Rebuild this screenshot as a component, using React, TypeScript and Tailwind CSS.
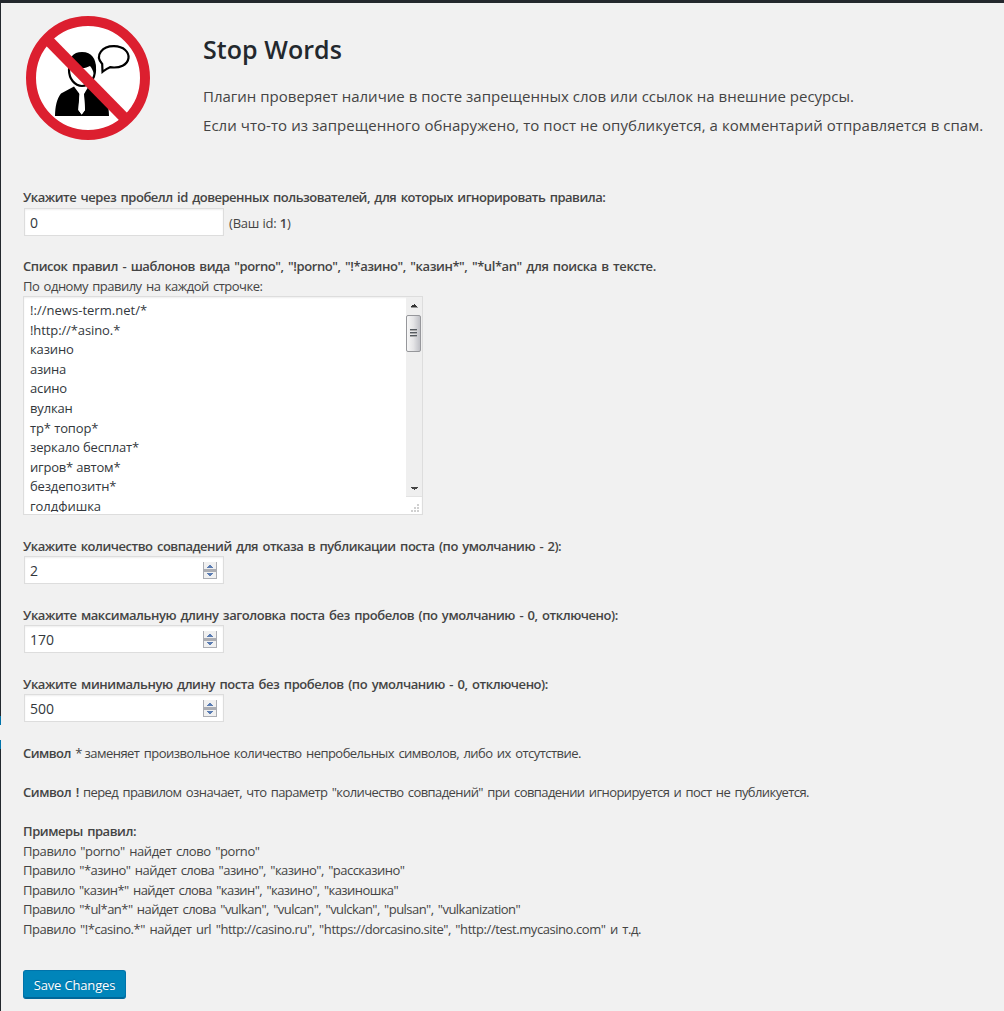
import type { ReactNode } from "react";

const rules = [
  { text: "!://news-term.net/*", cls: "tracking-[0.03px]" },
  { text: "!http://*asino.*", cls: "tracking-[-0.1px]" },
  { text: "казино", cls: "tracking-[-0.15px]" },
  { text: "азина", cls: "tracking-[-0.25px]" },
  { text: "асино", cls: "tracking-[-0.15px]" },
  { text: "вулкан", cls: "tracking-[-0.15px]" },
  { text: "тр* топор*", cls: "tracking-[-0.12px]" },
  { text: "зеркало бесплат*", cls: "tracking-[-0.15px]" },
  { text: "игров* автом*", cls: "tracking-[-0.2px]" },
  { text: "бездепозитн*", cls: "tracking-[-0.15px]" },
  { text: "голдфишка", cls: "tracking-[-0.04px]" },
];

const examples = [
  { text: 'Правило "porno" найдет слово "porno"', cls: "tracking-[-0.4px]" },
  { text: 'Правило "*азино" найдет слова "азино", "казино", "рассказино"', cls: "tracking-[-0.524px]" },
  { text: 'Правило "казин*" найдет слова "казин", "казино", "казиношка"', cls: "tracking-[-0.565px]" },
  {
    text: 'Правило "*ul*an*" найдет слова "vulkan", "vulcan", "vulckan", "pulsan", "vulkanization"',
    cls: "tracking-[-0.546px]",
  },
  {
    text: 'Правило "!*casino.*" найдет url "http://casino.ru", "https://dorcasino.site", "http://test.mycasino.com" и т.д.',
    cls: "tracking-[-0.435px]",
  },
];

function StopLogo() {
  return (
    <svg className="block h-[126px] w-[126px]" viewBox="25 15 126 126">
      <circle cx="88" cy="78" r="57" fill="#fff" stroke="#dc1f2f" strokeWidth="10" />
      <path
        d="M55 116C55 107 57 98 61 93.500L74 86.500L79.500 94L78.300 110L81.700 114.500L85 110L84 94L88.500 86.500L102 93.500C107 98 109 107 109 116Z"
        fill="#000"
      />
      <path d="M77.500 87L81.700 88.500L86 87L84.500 92L83.800 94L85 110L81.700 114.500L78.400 110L79.700 94Z" fill="#fff" />
      <ellipse cx="82" cy="70" rx="13" ry="16" fill="#fff" stroke="#000" strokeWidth="2.200" />
      <path d="M68 69C68 58 73 52 82 52C92 52 96 59 96 68L94 74C93 71 92 68 90 66C86 68 82 69 78 67L70 64L70 72Z" fill="#000" />
      <path
        d="M102.500 71.800L102.200 64C94 55 103 46 114 46.200C124 46.500 129 52 128.500 58C127.500 65 120 68.500 110 67.200C107 68.500 105 70 102.500 71.800Z"
        fill="#fff"
        stroke="#000"
        strokeWidth="2.200"
      />
      <path d="M47.500 39.500L125 118.500" stroke="#dc1f2f" strokeWidth="11" />
    </svg>
  );
}

function Line({ children, className = "" }: { children: ReactNode; className?: string }) {
  return (
    <div className={`h-[19.5px] whitespace-nowrap leading-[19.5px] [word-spacing:1.5px] ${className}`}>{children}</div>
  );
}

function Field({ value, spin = false }: { value: string; spin?: boolean }) {
  return (
    <div className="ml-px flex h-7 w-[200px] items-center justify-between border border-[#ddd] bg-white pr-1.5 pl-[5px] text-[14px] text-[#32373c] shadow-[inset_0_1px_2px_rgba(0,0,0,0.07)]">
      <span className="pt-0.5 leading-5">{value}</span>
      {spin && (
        <svg className="block h-[17px] w-[14px]" viewBox="0 0 14 17" shapeRendering="crispEdges">
          <path d="M0 0H14V17H0Z" fill="#abadb3" />
          <path d="M1 0H13V7H1ZM1 10H13V16H1Z" fill="#f0f0f0" />
          <path d="M6 3H8V4H9V5H10V6H4V5H5V4H6Z" fill="#5b7db3" />
          <path d="M4 11H10V12H9V13H8V14H6V13H5V12H4Z" fill="#5b7db3" />
        </svg>
      )}
    </div>
  );
}

function NumberSetting({ label, value, cls }: { label: string; value: string; cls: string }) {
  return (
    <div className="mb-[19.5px]">
      <Line className={`font-semibold ${cls}`}>{label}</Line>
      <div className="flex h-[30px] items-start">
        <Field value={value} spin />
      </div>
    </div>
  );
}

function RulesBox() {
  return (
    <div className="flex h-[219px] w-[400px] border border-[#ddd] bg-white shadow-[inset_0_1px_2px_rgba(0,0,0,0.07)]">
      <div className="h-[215px] flex-1 overflow-hidden pt-1 pl-1.5 text-[#32373c]">
        {rules.map((r) => (
          <div key={r.text} className={`h-[19.6px] whitespace-nowrap leading-[19.6px] ${r.cls}`}>
            {r.text}
          </div>
        ))}
      </div>
      <div className="flex w-4 flex-col">
        <div className="flex h-[200px] flex-col items-center border-b border-[#e3e3e3] bg-[#efefef]">
          <svg className="block h-[18px] w-4 shrink-0" viewBox="0 0 16 18" shapeRendering="crispEdges">
            <path d="M8 7H9V8H10V9H11V10H5V9H6V8H8Z" fill="#333" />
            <path d="M5 10H12V11H5Z" fill="#999" />
          </svg>
          <div className="flex h-[37px] w-[15px] shrink-0 flex-col items-center justify-center gap-px self-start rounded-[2px] border border-[#96979b] bg-linear-to-r from-[#f7f7f7] via-[#e4e4e6] to-[#bfc0c6] pb-0.5">
            <div className="h-0.5 w-[7px] border-b border-[#aaa] bg-[#555a60]" />
            <div className="h-0.5 w-[7px] border-b border-[#aaa] bg-[#555a60]" />
            <div className="h-0.5 w-[7px] border-b border-[#aaa] bg-[#555a60]" />
          </div>
          <svg className="mt-auto block h-[17px] w-4 shrink-0" viewBox="0 0 16 17" shapeRendering="crispEdges">
            <path d="M5 8H12V9H11V10H9V11H8V10H6V9H5Z" fill="#444" />
          </svg>
        </div>
        <svg className="block h-[17px] w-4" viewBox="0 0 16 17" shapeRendering="crispEdges">
          <path
            d="M11 7h2v2h-2zM8 10h2v2h-2zM11 10h2v2h-2zM5 13h2v2h-2zM8 13h2v2h-2zM11 13h2v2h-2z"
            fill="#d0d0d0"
          />
        </svg>
      </div>
    </div>
  );
}

export default function App() {
  return (
    <div className="flex h-[1011px] w-[1004px] flex-col overflow-hidden border-t-[3px] border-[#23282d] bg-[#f1f1f1] font-['Open_Sans',sans-serif] text-[13px] text-[#444]">
      <div className="flex min-h-0 flex-1">
        <div className="flex w-px shrink-0 flex-col bg-[#23282d]">
          <div className="mt-[713px] h-[9px] bg-[#0073aa]" />
          <div className="h-[15px] bg-[#f1f1f1]" />
          <div className="h-[9px] bg-[#0073aa]" />
        </div>
        <div className="pl-[22px]">
          <header className="flex h-[184.5px]">
            <div className="w-[180px] pt-3 pl-0.5">
              <StopLogo />
            </div>
            <div className="whitespace-nowrap">
              <h1 className="mt-[30px] h-8 text-[25px] leading-8 font-semibold tracking-[0.06px] text-[#23282d]">
                Stop Words
              </h1>
              <p className="mt-[17px] h-[29px] text-[15px] leading-[29px] tracking-[0.004px]">
                Плагин проверяет наличие в посте запрещенных слов или ссылок на внешние ресурсы.
              </p>
              <p className="h-[29px] text-[15px] leading-[29px] tracking-[0.05px]">
                Если что-то из запрещенного обнаружено, то пост не опубликуется, а комментарий отправляется в спам.
              </p>
            </div>
          </header>

          <div className="mb-[19.5px]">
            <Line className="font-semibold tracking-[-0.493px]">
              Укажите через пробелл id доверенных пользователей, для которых игнорировать правила:
            </Line>
            <div className="flex h-[30px] items-center">
              <Field value="0" />
              <span className="ml-[5px] pt-[3px] tracking-[-0.2px]">
                (Ваш id: <span className="font-semibold">1</span>)
              </span>
            </div>
          </div>

          <div className="mb-[21.5px]">
            <Line className="font-semibold tracking-[-0.42px]">
              Список правил - шаблонов вида "porno", "!porno", "!*азино", "казин*", "*ul*an" для поиска в тексте.
            </Line>
            <Line className="mb-[0.5px] pt-[0.5px] tracking-[-0.515px]">По одному правилу на каждой строчке:</Line>
            <RulesBox />
          </div>

          <NumberSetting
            label="Укажите количество совпадений для отказа в публикации поста (по умолчанию - 2):"
            value="2"
            cls="tracking-[-0.481px]"
          />
          <NumberSetting
            label="Укажите максимальную длину заголовка поста без пробелов (по умолчанию - 0, отключено):"
            value="170"
            cls="tracking-[-0.448px]"
          />
          <NumberSetting
            label="Укажите минимальную длину поста без пробелов (по умолчанию - 0, отключено):"
            value="500"
            cls="tracking-[-0.436px]"
          />

          <Line className="mb-[19.5px] flex">
            <span className="w-[61.5px] font-semibold tracking-[-0.52px]">
              Символ <span className="font-normal">*</span>
            </span>
            <span className="tracking-[-0.532px]">
              заменяет произвольное количество непробельных символов, либо их отсутствие.
            </span>
          </Line>
          <Line className="mb-[19.5px] flex">
            <span className="w-[60px] font-semibold tracking-[-0.46px]">Символ !</span>
            <span className="tracking-[-0.583px]">
              перед правилом означает, что параметр "количество совпадений" при совпадении игнорируется и пост не
              публикуется.
            </span>
          </Line>
          <Line className="font-semibold tracking-[-0.45px]">Примеры правил:</Line>
          <div className="pt-[0.5px]">
            {examples.map((e) => (
              <Line key={e.text} className={e.cls}>
                {e.text}
              </Line>
            ))}
          </div>

          <button className="mt-[30.5px] flex h-[29px] w-[103px] items-center justify-center rounded-[3px] border border-[#0073aa] border-b-[#006799] bg-[#0085ba] pt-[3px] tracking-[-0.16px] text-white [text-shadow:0_-1px_1px_#006799] shadow-[inset_0_-1px_0_#006799]">
            Save Changes
          </button>
        </div>
      </div>
    </div>
  );
}
